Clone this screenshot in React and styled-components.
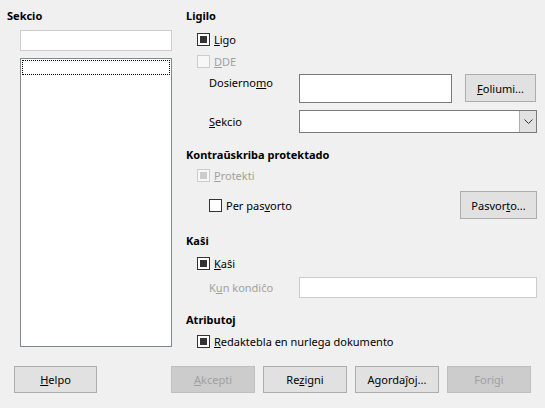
import React from "react";
import styled, { createGlobalStyle } from "styled-components";

const Global = createGlobalStyle`
  html, body { margin: 0; padding: 0; background: #f0f0f0; }
  body { font-family: "Noto Sans", "Segoe UI", sans-serif; font-size: 11px; color: #000; }
  * { box-sizing: border-box; }
`;

const Dialog = styled.div`
  width: 545px;
  height: 408px;
  background: #f0f0f0;
  display: flex;
  flex-direction: column;
`;

const Main = styled.div`
  display: flex;
  height: 366px;
`;

const LeftCol = styled.div`
  width: 186px;
  padding: 8px 0 0 7px;
  display: flex;
  flex-direction: column;
`;

const RightCol = styled.div`
  width: 351px;
  padding-top: 8px;
  display: flex;
  flex-direction: column;
`;

const Header = styled.div`
  font-weight: bold;
  font-size: 11px;
  line-height: 16px;
  height: 16px;
  margin-top: ${(p) => p.$mt || 0}px;
  white-space: nowrap;
`;

const NameInput = styled.div`
  margin: 6px 0 0 13px;
  width: 152px;
  height: 21px;
  background: #fff;
  border: 1px solid #cccccc;
`;

const ListBox = styled.div`
  margin: 7px 0 0 13px;
  width: 152px;
  height: 289px;
  background: #fff;
  border: 1px solid #828790;
  padding: 1px;
`;

const FocusRow = styled.div`
  height: 15px;
  border: 1px dotted #000;
`;

const CheckRow = styled.label`
  display: flex;
  align-items: center;
  height: 20px;
  flex: ${(p) => (p.$grow ? 1 : "none")};
  margin-top: ${(p) => p.$mt || 0}px;
  padding-left: ${(p) => p.$indent ?? 11}px;
  gap: 4px;
  color: ${(p) => (p.$disabled ? "#a0a0a0" : "#000")};
  white-space: nowrap;
`;

const Box = styled.span`
  width: 13px;
  height: 13px;
  flex: none;
  border: 1px solid ${(p) => (p.$disabled ? "#cccccc" : "#333333")};
  background: ${(p) => (p.$disabled ? "#f7f7f7" : "#fff")};
  display: flex;
  align-items: center;
  justify-content: center;
  &::after {
    content: "";
    display: ${(p) => (p.$checked ? "block" : "none")};
    width: 7px;
    height: 7px;
    background: ${(p) => (p.$disabled ? "#cccccc" : "#333333")};
  }
`;

const FieldRow = styled.div`
  display: flex;
  align-items: ${(p) => p.$align || "center"};
  margin-top: ${(p) => p.$mt || 0}px;
  padding-left: 23px;
`;

const FieldLabel = styled.span`
  width: 90px;
  flex: none;
  line-height: 16px;
  padding-top: ${(p) => p.$pt || 0}px;
  color: ${(p) => (p.$disabled ? "#a0a0a0" : "#000")};
  white-space: nowrap;
`;

const TextBox = styled.div`
  width: ${(p) => p.$w}px;
  height: ${(p) => p.$h}px;
  flex: none;
  background: #fff;
  border: 1px solid ${(p) => (p.$disabled ? "#cccccc" : "#7a7a7a")};
`;

const Combo = styled.div`
  width: 238px;
  height: 23px;
  flex: none;
  background: #fff;
  border: 1px solid #7a7a7a;
  display: flex;
  justify-content: flex-end;
`;

const ComboBtn = styled.div`
  width: 17px;
  height: 100%;
  background: #e1e1e1;
  border-left: 1px solid #adadad;
  display: flex;
  align-items: center;
  justify-content: center;
`;

const Button = styled.div`
  width: ${(p) => p.$w || 84}px;
  height: ${(p) => p.$h || 28}px;
  flex: none;
  margin-left: ${(p) => p.$ml || 0}px;
  background: ${(p) => (p.$disabled ? "#cccccc" : "#e1e1e1")};
  border: 1px solid ${(p) => (p.$disabled ? "#bfbfbf" : "#adadad")};
  color: ${(p) => (p.$disabled ? "#a0a0a0" : "#000")};
  display: flex;
  align-items: center;
  justify-content: center;
  white-space: nowrap;
`;

const ButtonBar = styled.div`
  display: flex;
  padding-left: 14px;
  gap: 8px;
`;

const Spacer = styled.div`
  width: 58px;
`;

const U = styled.span`
  text-decoration: underline;
`;

const Check = ({ label, checked, disabled, mt, indent }) => (
  <CheckRow $mt={mt} $disabled={disabled} $indent={indent}>
    <Box $checked={checked} $disabled={disabled} />
    <span>{label}</span>
  </CheckRow>
);

export default function App() {
  return (
    <Dialog>
      <Global />
      <Main>
        <LeftCol>
          <Header>Sekcio</Header>
          <NameInput />
          <ListBox>
            <FocusRow />
          </ListBox>
        </LeftCol>
        <RightCol>
          <Header>Ligilo</Header>
          <Check mt={5} checked label={<><U>L</U>igo</>} />
          <Check mt={2} disabled label={<><U>D</U>DE</>} />
          <FieldRow $mt={3} $align="flex-start">
            <FieldLabel $pt={1}>Dosierno<U>m</U>o</FieldLabel>
            <TextBox $w={153} $h={29} />
            <Button $ml={13} $w={71} $h={28}><span><U>F</U>oliumi...</span></Button>
          </FieldRow>
          <FieldRow $mt={7}>
            <FieldLabel><U>S</U>ekcio</FieldLabel>
            <Combo>
              <ComboBtn>
                <svg width="9" height="5" viewBox="0 0 9 5">
                  <path d="M0.5 0.5 L4.5 4.5 L8.5 0.5" fill="none" stroke="#333" strokeWidth="1" />
                </svg>
              </ComboBtn>
            </Combo>
          </FieldRow>
          <Header $mt={14}>Kontraŭskriba protektado</Header>
          <Check mt={2} checked disabled label={<><U>P</U>rotekti</>} />
          <FieldRow $mt={6}>
            <CheckRow $indent={0} $grow>
              <Box />
              <span>Per pas<U>v</U>orto</span>
            </CheckRow>
            <Button $w={77} $h={28}><span>Pasvor<U>t</U>o...</span></Button>
          </FieldRow>
          <Header $mt={14}>Kaŝi</Header>
          <Check mt={4} checked label={<><U>K</U>aŝi</>} />
          <FieldRow $mt={4}>
            <FieldLabel $disabled>K<U>u</U>n kondiĉo</FieldLabel>
            <TextBox $w={238} $h={21} $disabled />
          </FieldRow>
          <Header $mt={14}>Atributoj</Header>
          <Check mt={3} checked label={<><U>R</U>edaktebla en nurlega dokumento</>} />
        </RightCol>
      </Main>
      <ButtonBar>
        <Button $w={83} $h={27}><span><U>H</U>elpo</span></Button>
        <Spacer />
        <Button $disabled $h={27}><span><U>A</U>kcepti</span></Button>
        <Button $h={27}><span>Re<U>z</U>igni</span></Button>
        <Button $h={27}><span>Agordaĵoj...</span></Button>
        <Button $disabled $h={27}><span>Forigi</span></Button>
      </ButtonBar>
    </Dialog>
  );
}
